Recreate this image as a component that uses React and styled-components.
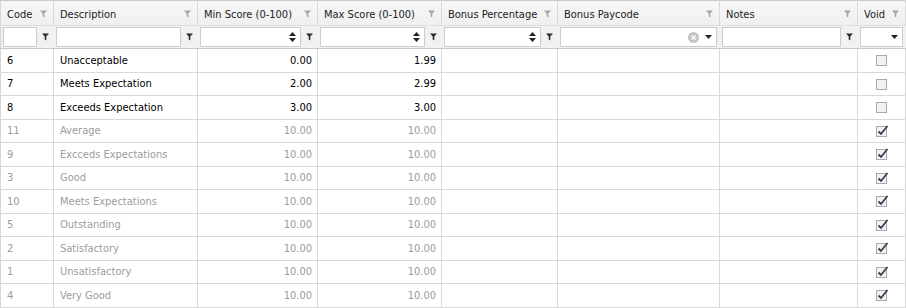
import React from 'react';
import styled, { createGlobalStyle } from 'styled-components';

const GlobalStyle = createGlobalStyle`
	html, body {
		margin: 0;
		padding: 0;
		background: #fff;
	}
	body {
		font-family: 'DejaVu Sans Condensed', 'DejaVu Sans', sans-serif;
		font-stretch: condensed;
		font-size: 11px;
	}
`;

const Grid = styled.table`
	width: 906px;
	table-layout: fixed;
	border-collapse: collapse;
	border-top: 1px solid #c9c9c9;
	border-left: 1px solid #d6d6d6;
	color: #000;
`;

const HeadCell = styled.th`
	height: 22px;
	padding: 2px 6px 0 6px;
	background: linear-gradient(#f7f7f7, #efefef);
	border-right: 1px solid #d9d9d9;
	border-bottom: 1px solid #e1e1e1;
	font-weight: normal;
	text-align: left;
	color: #222;
	white-space: nowrap;
`;

const HeadInner = styled.div`
	display: flex;
	align-items: center;
	justify-content: space-between;
	gap: 6px;
`;

const FilterCell = styled.td`
	height: 22px;
	padding: 0 2px 0 2px;
	background: #f1f1f1;
	border-right: 1px solid #f1f1f1;
	border-bottom: 1px solid #c8c8c8;
`;

const FilterInner = styled.div`
	display: flex;
	align-items: center;
	gap: 2px;
`;

const FilterBox = styled.div`
	flex: 1;
	height: 18px;
	display: flex;
	align-items: center;
	justify-content: flex-end;
	gap: 6px;
	padding: 0 4px;
	background: #fff;
	border: 1px solid #cdcdcd;
`;

const FunnelSlot = styled.div`
	width: 12px;
	display: flex;
	justify-content: center;
`;

const Row = styled.tr`
	height: 23.5px;
`;

const Cell = styled.td`
	padding: 0 ${(p) => (p.$align === 'right' ? '5px' : '6px')};
	border-right: 1px solid #d9d9d9;
	border-bottom: 1px solid #d9d9d9;
	text-align: ${(p) => p.$align || 'left'};
	color: ${(p) => (p.$muted ? '#9c9c9c' : '#000')};
	white-space: nowrap;
	overflow: hidden;
`;

const CheckCell = styled(Cell)`
	text-align: center;
	padding: 0;
`;

const Funnel = ({ dark }) => (
	<svg width='7' height='8' viewBox='0 0 7 8'>
		<path d='M0 0.5h7L4.3 3.5V7.5L2.7 6.5V3.5z' fill={dark ? '#2b2b2b' : '#a5a5a5'} />
	</svg>
);

const Spinner = () => (
	<svg width='7' height='12' viewBox='0 0 7 12'>
		<path d='M3.5 1L7 5H0z' fill='#222' />
		<path d='M3.5 11L7 7H0z' fill='#222' />
	</svg>
);

const Caret = () => (
	<svg width='7' height='4' viewBox='0 0 7 4'>
		<path d='M0 0h7L3.5 4z' fill='#222' />
	</svg>
);

const ClearIcon = () => (
	<svg width='11' height='11' viewBox='0 0 11 11'>
		<circle cx='5.5' cy='5.5' r='5.5' fill='#c4c4c4' />
		<path d='M3.5 3.5l4 4M7.5 3.5l-4 4' stroke='#fff' strokeWidth='1.5' />
	</svg>
);

const Check = ({ checked }) => (
	<svg width='14' height='14' viewBox='0 0 14 14' style={{ verticalAlign: 'middle' }}>
		<rect x='1.5' y='2.5' width='10' height='10' fill='#f2f2f4' stroke='#a9a9b0' />
		{checked && (
			<path d='M3.5 7.5l2.5 2.5L12.5 2' fill='none' stroke='#3b3b4c' strokeWidth='1.8' />
		)}
	</svg>
);

const columns = [
	{ title: 'Code', width: 53 },
	{ title: 'Description', width: 144 },
	{ title: 'Min Score (0-100)', width: 120, spin: true },
	{ title: 'Max Score (0-100)', width: 124, spin: true },
	{ title: 'Bonus Percentage', width: 116, spin: true },
	{ title: 'Bonus Paycode', width: 162, combo: true },
	{ title: 'Notes', width: 138 },
	{ title: 'Void', width: 48, select: true },
];

const rows = [
	['6', 'Unacceptable', '0.00', '1.99', false],
	['7', 'Meets Expectation', '2.00', '2.99', false],
	['8', 'Exceeds Expectation', '3.00', '3.00', false],
	['11', 'Average', '10.00', '10.00', true],
	['9', 'Excceds Expectations', '10.00', '10.00', true],
	['3', 'Good', '10.00', '10.00', true],
	['10', 'Meets Expectations', '10.00', '10.00', true],
	['5', 'Outstanding', '10.00', '10.00', true],
	['2', 'Satisfactory', '10.00', '10.00', true],
	['1', 'Unsatisfactory', '10.00', '10.00', true],
	['4', 'Very Good', '10.00', '10.00', true],
];

const FilterControl = ({ col }) => {
	if (col.combo) {
		return (
			<FilterInner>
				<FilterBox>
					<ClearIcon />
					<Caret />
				</FilterBox>
			</FilterInner>
		);
	}
	if (col.select) {
		return (
			<FilterInner>
				<FilterBox>
					<Caret />
				</FilterBox>
			</FilterInner>
		);
	}
	return (
		<FilterInner>
			<FilterBox>{col.spin && <Spinner />}</FilterBox>
			<FunnelSlot>
				<Funnel dark />
			</FunnelSlot>
		</FilterInner>
	);
};

export default function App() {
	return (
		<>
			<GlobalStyle />
			<Grid>
				<colgroup>
					{columns.map((c) => (
						<col key={c.title} style={{ width: c.width }} />
					))}
				</colgroup>
				<thead>
					<tr>
						{columns.map((c) => (
							<HeadCell key={c.title}>
								<HeadInner>
									<span>{c.title}</span>
									<Funnel />
								</HeadInner>
							</HeadCell>
						))}
					</tr>
					<tr>
						{columns.map((c) => (
							<FilterCell key={c.title}>
								<FilterControl col={c} />
							</FilterCell>
						))}
					</tr>
				</thead>
				<tbody>
					{rows.map(([code, desc, min, max, isVoid]) => (
						<Row key={code}>
							<Cell $muted={isVoid}>{code}</Cell>
							<Cell $muted={isVoid}>{desc}</Cell>
							<Cell $muted={isVoid} $align='right'>{min}</Cell>
							<Cell $muted={isVoid} $align='right'>{max}</Cell>
							<Cell />
							<Cell />
							<Cell />
							<CheckCell>
								<Check checked={isVoid} />
							</CheckCell>
						</Row>
					))}
				</tbody>
			</Grid>
		</>
	);
}
